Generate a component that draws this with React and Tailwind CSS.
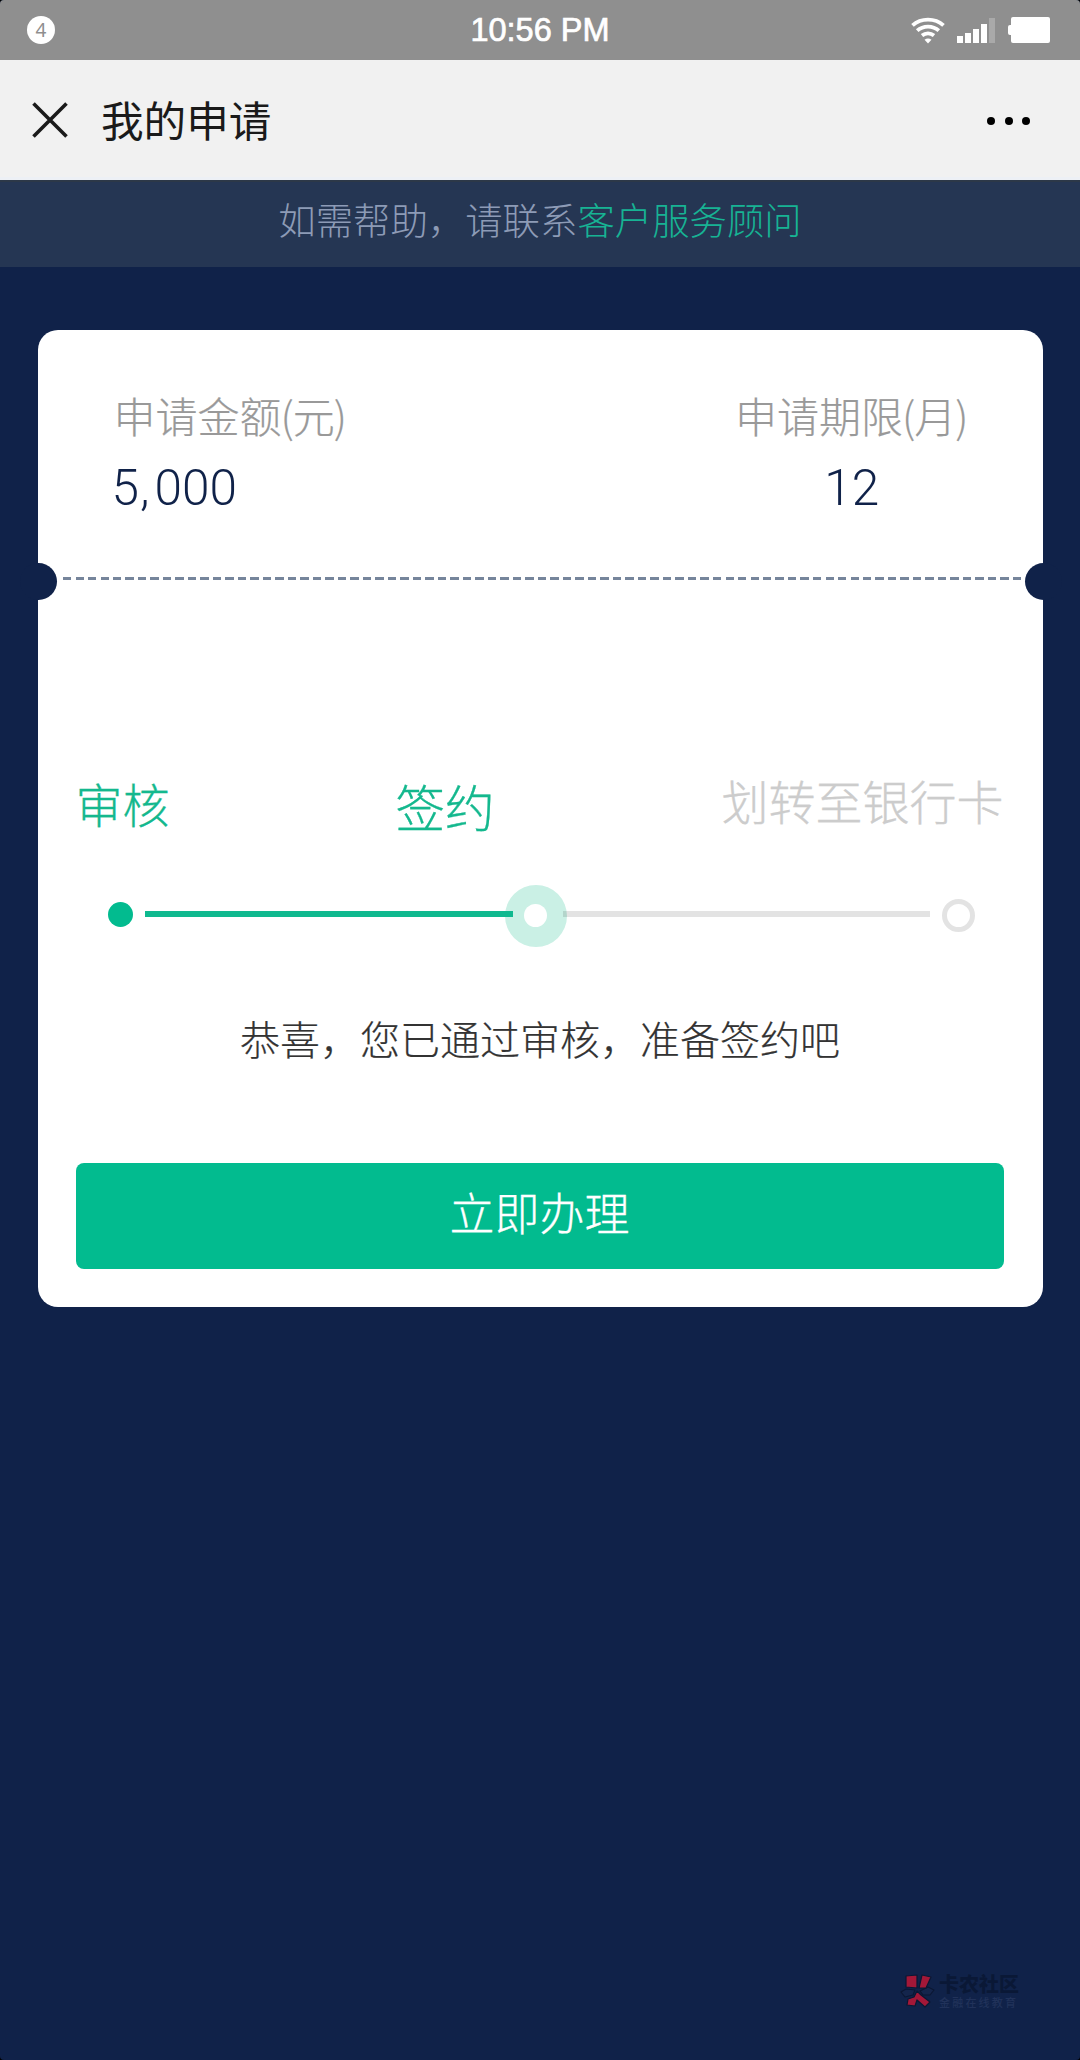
const WifiIcon = () => (
  <svg className="h-[27px] w-[34px]" viewBox="0 0 34 27" fill="none" stroke="#fff" strokeWidth="3.8">
    <path d="M1.500 8.400C10 .6 24 .6 32.500 8.400" />
    <path d="M6.200 13.600C12.200 8.200 21.800 8.200 27.800 13.600" />
    <path d="M11 18.600C14.500 15.800 19.500 15.800 23 18.600" />
    <path d="M13.500 22.800Q17 20.400 20.500 22.800L17 26.600Z" fill="#fff" stroke="none" />
  </svg>
);

const SignalIcon = () => (
  <div className="flex h-[25px] items-end gap-[2px]">
    <i className="h-[7px] w-[6px] bg-white" />
    <i className="h-[10px] w-[6px] bg-white" />
    <i className="h-[14px] w-[6px] bg-white" />
    <i className="h-[19px] w-[6px] bg-white" />
    <i className="h-[25px] w-[6px] bg-[#a9a9a9]" />
  </div>
);

const StatusBar = () => (
  <div className="grid h-[60px] grid-cols-3 items-center bg-[#8f8f8f] pl-[27px] pr-[30px]">
    <div className="flex h-[28px] w-[28px] items-center justify-center rounded-full bg-white font-['Noto_Sans',sans-serif] text-[19px] font-normal leading-none text-[#8f8f8f]">
      4
    </div>
    <div className="pl-[3px] text-center font-['Liberation_Sans',sans-serif] text-[32.500px] leading-none text-white [-webkit-text-stroke:0.7px_white]">
      10:56 PM
    </div>
    <div className="flex items-center justify-end">
      <WifiIcon />
      <div className="ml-[12px]">
        <SignalIcon />
      </div>
      <div className="ml-[13px] h-[10px] w-[3px] rounded-l-[2px] bg-white" />
      <div className="h-[26px] w-[39px] rounded-[2px] bg-white" />
    </div>
  </div>
);

const NavBar = () => (
  <div className="flex h-[120px] items-center border-b-[3px] border-[#edf0f5] bg-[#f1f1f1] pl-[32px] pr-[50px]">
    <svg className="mt-[3px] h-[36px] w-[36px]" viewBox="0 0 36 36" stroke="#1a1a1a" strokeWidth="3.6">
      <path d="M1.500 1.500L34.500 34.500M34.500 1.500L1.500 34.500" />
    </svg>
    <h1 className="ml-[33px] text-[42.600px] font-normal leading-[60px] text-[#1a1a1a]">我的申请</h1>
    <div className="ml-auto mt-[4px] flex gap-[9.500px]">
      <i className="h-2 w-2 rounded-full bg-black" />
      <i className="h-2 w-2 rounded-full bg-black" />
      <i className="h-2 w-2 rounded-full bg-black" />
    </div>
  </div>
);

const Stat = ({ label, unit, value, className }) => (
  <div className={className}>
    <div className="text-[42px] leading-[60px] text-[#999] [-webkit-text-stroke:0.2px_#999]">
      {label}
      <span className="-ml-[1px]">(</span>
      <span className="-mx-[1px]">{unit}</span>)
    </div>
    <div className="mt-[13px] font-['Roboto',sans-serif] text-[49.500px] leading-[60px] text-[#102249]">{value}</div>
  </div>
);

const Progress = () => (
  <div className="flex h-[62px] items-center pl-[70px] pr-[67px]">
    <div className="-mt-[3px] h-[25px] w-[25px] rounded-full bg-[#02bb8f]" />
    <div className="z-10 -mt-[3px] ml-[12px] h-[5.500px] w-[368px] bg-[#0fb98f]" />
    <div className="-ml-[8px] flex h-[62px] w-[62px] items-center justify-center rounded-full bg-[#caf0e5]">
      <div className="h-[23px] w-[23px] rounded-full bg-white" />
    </div>
    <div className="-ml-[4px] -mt-[3px] h-[5.500px] w-[367px] bg-black/11" />
    <div className="ml-[12px] h-[33px] w-[33px] rounded-full border-[5px] border-[#e3e3e3]" />
  </div>
);

const Ticket = () => (
  <main className="relative mx-[37.500px] mt-[63px] h-[977px] rounded-[20px] bg-white">
    <div className="flex h-[247px] justify-between pl-[76px] pr-[74px] pt-[55px]">
      <Stat
        label="申请金额"
        unit="元"
        value={
          <span className="-ml-[2px]">
            5<span className="pl-[1px] pr-[5px]">,</span>000
          </span>
        }
      />
      <Stat label="申请期限" unit="月" value="12" className="text-center" />
    </div>
    <div className="ml-[25px] mr-[18px] h-[2.500px] bg-[repeating-linear-gradient(90deg,#76859b_0_8px,transparent_8px_12.500px)]" />
    <i className="absolute -left-[18px] top-[233px] h-[37px] w-[37px] rounded-full bg-[#102249]" />
    <i className="absolute -right-[19px] top-[233px] h-[37px] w-[37px] rounded-full bg-[#102249]" />

    <div className="mt-[190px] flex h-[115px] items-start pl-[38px] pr-[39px] text-[#14b88e] [-webkit-text-stroke:0.3px_currentColor]">
      <span className="pt-[3px] text-[47px] leading-[60px]">审核</span>
      <span className="ml-[226px] pt-[6px] text-[49.500px] leading-[60px]">签约</span>
      <span className="ml-auto text-[47px] leading-[60px] text-[#ccc]">划转至银行卡</span>
    </div>
    <Progress />
    <p className="mt-[61px] text-center text-[40px] leading-[60px] text-[#333] [-webkit-text-stroke:0.2px_#333]">
      恭喜，您已通过审核，准备签约吧
    </p>
    <button className="mx-[38px] mt-[95px] flex h-[106px] w-[928px] justify-center rounded-[8px] bg-[#02bb8f] pt-[19px] text-[45px] font-light leading-[60px] text-white [-webkit-text-stroke:0.3px_white]">
      立即办理
    </button>
  </main>
);

const Watermark = () => (
  <div className="mb-[51px] ml-auto mr-[61px] flex h-[36px] items-center">
    <svg className="h-[36px] w-[36px]" viewBox="0 0 36 36" stroke="#0b1733" strokeWidth="1.2" strokeLinejoin="round">
      <path d="M1 19L6 16L15 17L13 22L5 24ZM20 18L28 14L34 17L30 22L23 22Z" fill="#14254c" />
      <path d="M6 3L17 2V15L6 14Z" fill="#a31838" />
      <path d="M22 2L31 4L26 15L19 15Z" fill="#a31838" />
      <path d="M17 18L21 22L30 29L25 34L17 27L15 33L7 32L8 26L14 24Z" fill="#a31838" />
    </svg>
    <div className="ml-[3px]">
      <div className="flex h-[20px] items-center text-[20px] font-black leading-none text-[#0a1836]">卡农社区</div>
      <div className="mt-[3px] flex h-[12px] items-center text-[11px] font-medium leading-none tracking-[2.200px] text-[#21325a]">
        金融在线教育
      </div>
    </div>
  </div>
);

export default function App() {
  return (
    <div className="h-[2060px] w-[1080px] overflow-hidden bg-black">
      <div className="flex h-full flex-col overflow-hidden rounded-[4px] bg-[#102249] font-['Noto_Sans_CJK_SC',sans-serif] font-light">
        <StatusBar />
        <NavBar />
        <div className="h-[87px] border-t-2 border-[#2c3848] bg-[#253653] pt-[7px] text-center text-[37.400px] leading-[60px] text-[#8d9bb6]">
          如需帮助，请联系<a className="text-[#17b394]">客户服务顾问</a>
        </div>
        <Ticket />
        <div className="grow" />
        <Watermark />
      </div>
    </div>
  );
}
